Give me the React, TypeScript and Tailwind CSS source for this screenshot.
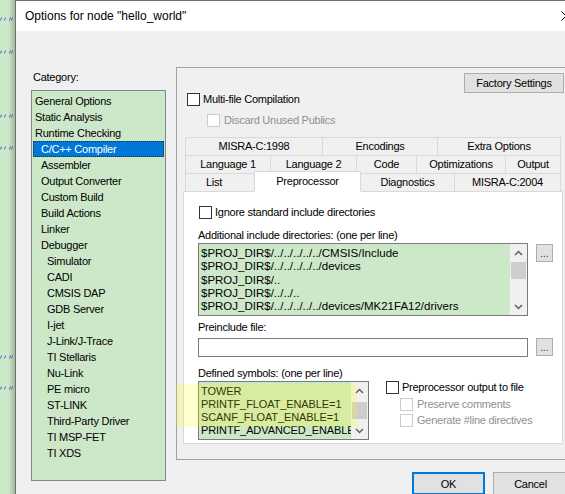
import React from "react";

const Check = ({ disabled = false }: { disabled?: boolean }) => (
  <div
    className={
      disabled
        ? "w-[13px] h-[13px] shrink-0 border border-[#cccccc] bg-white"
        : "w-[13px] h-[13px] shrink-0 border border-[#333333] bg-white"
    }
  />
);

const Chevron = ({ up }: { up: boolean }) => (
  <svg width="9" height="6" viewBox="0 0 9 6">
    <path
      d={up ? "M1 5 L4.5 1.5 L8 5" : "M1 1 L4.5 4.5 L8 1"}
      fill="none"
      stroke="#606060"
      strokeWidth="1.5"
    />
  </svg>
);

const Scrollbar = ({ thumbClass }: { thumbClass: string }) => (
  <div className="w-[17px] h-full shrink-0 bg-[#f0f0f0] flex flex-col">
    <div className="h-[17px] shrink-0 flex items-center justify-center">
      <Chevron up={true} />
    </div>
    <div className="flex-1 px-px">
      <div className={thumbClass} />
    </div>
    <div className="h-[17px] shrink-0 flex items-center justify-center">
      <Chevron up={false} />
    </div>
  </div>
);

const DotsButton = () => (
  <div className="w-[17px] h-[18px] shrink-0 border border-[#adadad] bg-[#e1e1e1] flex items-end justify-center pb-[2px] text-[10px] leading-[10px] tracking-normal text-[#333]">
    ...
  </div>
);

type Cat = { label: string; level: 0 | 1 | 2; selected?: boolean };

const categories: Cat[] = [
  { label: "General Options", level: 0 },
  { label: "Static Analysis", level: 0 },
  { label: "Runtime Checking", level: 0 },
  { label: "C/C++ Compiler", level: 1, selected: true },
  { label: "Assembler", level: 1 },
  { label: "Output Converter", level: 1 },
  { label: "Custom Build", level: 1 },
  { label: "Build Actions", level: 1 },
  { label: "Linker", level: 1 },
  { label: "Debugger", level: 1 },
  { label: "Simulator", level: 2 },
  { label: "CADI", level: 2 },
  { label: "CMSIS DAP", level: 2 },
  { label: "GDB Server", level: 2 },
  { label: "I-jet", level: 2 },
  { label: "J-Link/J-Trace", level: 2 },
  { label: "TI Stellaris", level: 2 },
  { label: "Nu-Link", level: 2 },
  { label: "PE micro", level: 2 },
  { label: "ST-LINK", level: 2 },
  { label: "Third-Party Driver", level: 2 },
  { label: "TI MSP-FET", level: 2 },
  { label: "TI XDS", level: 2 },
];

const levelPad = ["pl-[3px]", "pl-[9px]", "pl-[15px]"];

const Tab = ({ label, w }: { label: string; w: string }) => (
  <div
    className={`${w} h-[19px] shrink-0 -ml-px first:ml-0 border border-[#d9d9d9] bg-[#f0f0f0] flex items-center justify-center leading-[13px]`}
  >
    {label}
  </div>
);

const Mark = ({ mt }: { mt: string }) => (
  <svg className={`${mt} shrink-0`} width="15" height="4" viewBox="0 0 15 4">
    <path d="M0.5 3.5 L1.5 0.5 M4.5 3.5 L5.5 0.5 M9.5 3.5 L10.5 0.5 M11.5 3.5 L12.5 0.5" stroke="#4b63c9" strokeWidth="1" />
  </svg>
);

export default function App() {
  return (
    <div className="relative w-[565px] h-[494px] overflow-hidden flex bg-[#cde8c9] font-['Liberation_Sans',Arial,sans-serif] text-[11px] tracking-[-0.25px] text-black">
      {/* background strip */}
      <div className="w-[15px] shrink-0 h-full flex flex-col bg-[linear-gradient(to_right,#cde8c9_55%,#a3b9a0)]">
        <Mark mt="mt-[17px]" />
        <Mark mt="mt-[29px]" />
        <Mark mt="mt-[60px]" />
        <Mark mt="mt-[28px]" />
        <Mark mt="mt-[205px]" />
        <Mark mt="mt-[27px]" />
      </div>

      {/* dialog */}
      <div className="w-[600px] shrink-0 flex flex-col border-l border-t border-[#707070] bg-[#f0f0f0]">
        {/* title bar */}
        <div className="h-[30px] shrink-0 bg-white flex items-center">
          <span className="pl-[9px] text-[12px] leading-[14px] tracking-normal text-black">
            Options for node "hello_world"
          </span>
          <svg className="ml-auto mr-[44px]" width="10" height="10" viewBox="0 0 10 10">
            <path d="M0.5 0.5 L9.5 9.5 M9.5 0.5 L0.5 9.5" stroke="#000" strokeWidth="1" />
          </svg>
        </div>

        {/* body */}
        <div className="flex-1 flex pl-[15px]">
          {/* left column */}
          <div className="w-[135px] shrink-0 flex flex-col">
            <div className="mt-[40px] h-[13px] leading-[13px] pl-[2px]">Category:</div>
            <div className="mt-[6px] h-[391px] border border-[#828790] bg-[#cde8c9] pt-[2px] flex flex-col">
              {categories.map((c) => (
                <div
                  key={c.label}
                  className={
                    c.selected
                      ? "h-[16px] leading-[14px] mx-px border border-dotted border-[#2b2b2b] bg-[#0078d7] text-white pl-[7px]"
                      : `h-[16px] leading-[16px] ${levelPad[c.level]}`
                  }
                >
                  {c.label}
                </div>
              ))}
            </div>
          </div>

          {/* right column */}
          <div className="ml-[10px] flex flex-col">
            <div className="mt-[36px] w-[400px] h-[393px] shrink-0 border border-[#a0a0a0] flex flex-col">
              <div className="ml-[287px] mt-[5px] w-[100px] h-[20px] border border-[#adadad] bg-[#e1e1e1] flex items-center justify-center leading-[13px]">
                Factory Settings
              </div>
              <div className="ml-[10px] h-[13px] flex items-center">
                <Check />
                <span className="ml-[3px] leading-[13px]">Multi-file Compilation</span>
              </div>
              <div className="ml-[30px] mt-[8px] h-[13px] flex items-center">
                <Check disabled />
                <span className="ml-[4px] leading-[13px] text-[#8f8f8f]">Discard Unused Publics</span>
              </div>

              {/* tabs */}
              <div className="ml-[8px] mt-[10px] flex flex-col w-[375px]">
                <div className="flex">
                  <Tab label="MISRA-C:1998" w="w-[138px]" />
                  <Tab label="Encodings" w="w-[116px]" />
                  <Tab label="Extra Options" w="w-[124px]" />
                </div>
                <div className="flex -mt-px">
                  <Tab label="Language 1" w="w-[86px]" />
                  <Tab label="Language 2" w="w-[87px]" />
                  <Tab label="Code" w="w-[61px]" />
                  <Tab label="Optimizations" w="w-[90px]" />
                  <Tab label="Output" w="w-[56px]" />
                </div>
                <div className="flex items-end h-[19px] -mt-px">
                  <div className="w-[70px] h-[19px] shrink-0 border border-[#d9d9d9] bg-[#f0f0f0] flex items-center pl-[20px] leading-[13px]">
                    List
                  </div>
                  <div className="relative z-10 w-[107px] h-[21px] shrink-0 -ml-px border border-[#d9d9d9] border-b-white bg-white flex items-center justify-center leading-[13px] pb-[1px]">
                    Preprocessor
                  </div>
                  <Tab label="Diagnostics" w="w-[95px]" />
                  <Tab label="MISRA-C:2004" w="w-[107px]" />
                </div>
              </div>

              {/* tab page */}
              <div className="ml-[6px] -mt-px w-[380px] h-[253px] shrink-0 border border-[#d9d9d9] bg-white flex flex-col pl-[14px]">
                <div className="mt-[14px] ml-px h-[13px] flex items-center">
                  <Check />
                  <span className="ml-[3px] leading-[13px]">Ignore standard include directories</span>
                </div>
                <div className="mt-[10px] h-[13px] leading-[13px]">Additional include directories: (one per line)</div>
                <div className="mt-px flex items-start">
                  <div className="w-[330px] h-[73px] shrink-0 border border-[#7a7a7a] bg-[#cde8c9] flex">
                    <div className="flex-1 pl-[2px] pt-[3px] text-[11.5px] tracking-normal leading-[13.25px] whitespace-nowrap overflow-hidden">
                      <div>$PROJ_DIR$/../../../../../CMSIS/Include</div>
                      <div>$PROJ_DIR$/../../../../../devices</div>
                      <div>$PROJ_DIR$/..</div>
                      <div>$PROJ_DIR$/../../..</div>
                      <div>$PROJ_DIR$/../../../../../devices/MK21FA12/drivers</div>
                    </div>
                    <Scrollbar thumbClass="mt-px h-[17px] bg-[#cdcdcd]" />
                  </div>
                  <div className="ml-[8px] mt-px">
                    <DotsButton />
                  </div>
                </div>
                <div className="mt-[5px] h-[13px] leading-[13px]">Preinclude file:</div>
                <div className="mt-[4px] flex items-start">
                  <div className="w-[330px] h-[19px] shrink-0 border border-[#7a7a7a] bg-white" />
                  <div className="ml-[8px]">
                    <DotsButton />
                  </div>
                </div>
                <div className="mt-[10px] h-[13px] leading-[13px]">Defined symbols: (one per line)</div>
                <div className="mt-px flex items-start">
                  <div className="w-[171px] h-[59px] shrink-0 border border-[#7a7a7a] bg-[#cde8c9] flex">
                    <div className="flex-1 pl-[2px] pt-[3px] text-[11px] tracking-[-0.1px] leading-[13px] whitespace-nowrap overflow-hidden">
                      <div>TOWER</div>
                      <div>PRINTF_FLOAT_ENABLE=1</div>
                      <div>SCANF_FLOAT_ENABLE=1</div>
                      <div>PRINTF_ADVANCED_ENABLE=1</div>
                    </div>
                    <Scrollbar thumbClass="mt-[3px] h-[17px] bg-[#cdcdcd]" />
                  </div>
                  <div className="ml-[17px] flex flex-col">
                    <div className="h-[13px] flex items-center">
                      <Check />
                      <span className="ml-[3px] leading-[13px]">Preprocessor output to file</span>
                    </div>
                    <div className="ml-[14px] mt-[4px] h-[13px] flex items-center">
                      <Check disabled />
                      <span className="ml-[4px] leading-[13px] text-[#8f8f8f]">Preserve comments</span>
                    </div>
                    <div className="ml-[14px] mt-[3px] h-[13px] flex items-center">
                      <Check disabled />
                      <span className="ml-[4px] leading-[13px] text-[#8f8f8f]">Generate #line directives</span>
                    </div>
                  </div>
                </div>
              </div>
            </div>

            {/* bottom buttons */}
            <div className="mt-[12px] ml-[236px] flex">
              <div className="w-[73px] h-[23px] border-2 border-[#0078d7] bg-[#e1e1e1] flex items-center justify-center leading-[13px] pt-[2px]">
                OK
              </div>
              <div className="ml-[8px] w-[75px] h-[23px] border border-[#adadad] bg-[#e1e1e1] flex items-center justify-center leading-[13px] pt-[2px]">
                Cancel
              </div>
            </div>
          </div>
        </div>
      </div>

      {/* highlighter mark over the defined symbols */}
      <div className="absolute left-[176px] top-[384px] w-[181px] h-[43px] rounded-[2px] bg-[#ffff00]/20 pointer-events-none" />
    </div>
  );
}
